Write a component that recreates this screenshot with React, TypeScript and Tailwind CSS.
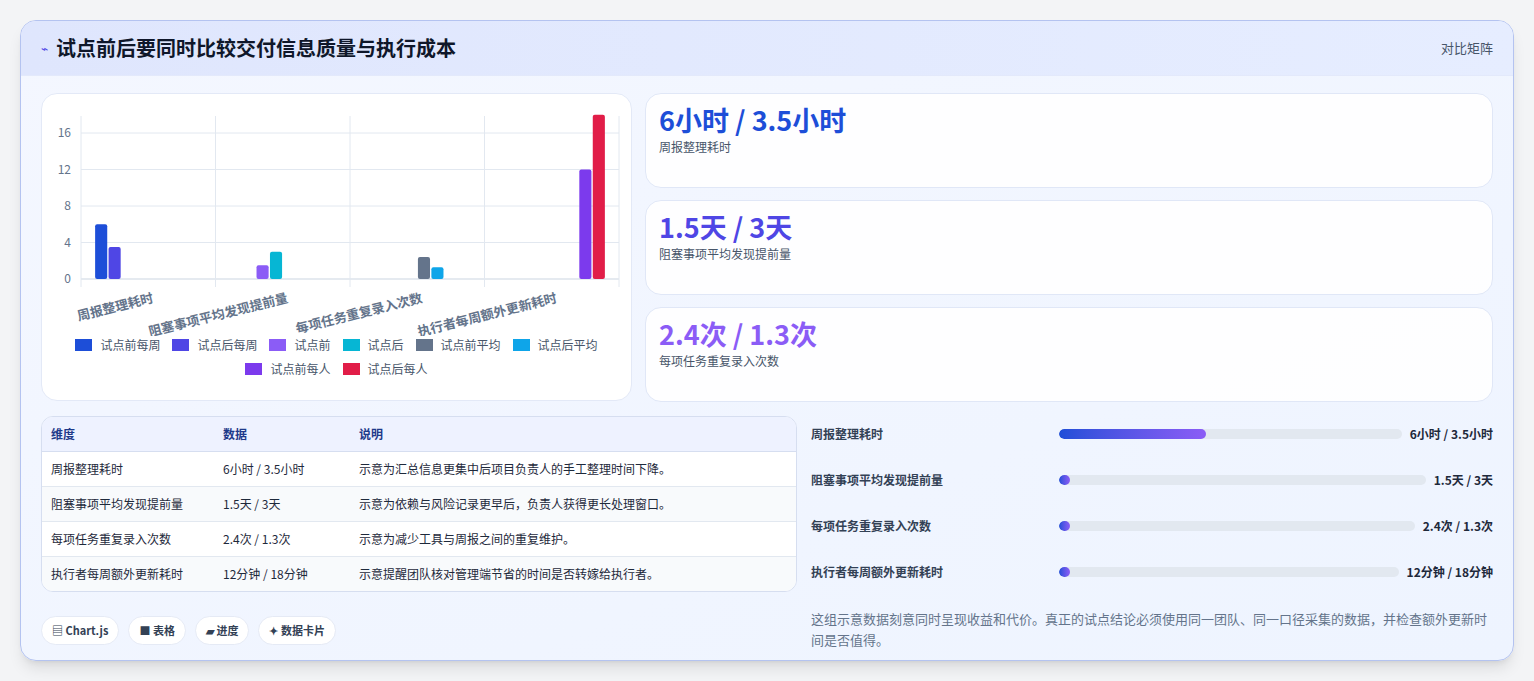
import React from "react";

const F = { fontFamily: '"Noto Sans CJK SC", "Noto Sans", sans-serif' };

const colors = ["#1d4ed8", "#4f46e5", "#8b5cf6", "#06b6d4", "#64748b", "#0ea5e9", "#7c3aed", "#e11d48"];
const legend = ["试点前每周", "试点后每周", "试点前", "试点后", "试点前平均", "试点后平均", "试点前每人", "试点后每人"];
const values = [6, 3.5, 1.5, 3, 2.4, 1.3, 12, 18];
const cats = ["周报整理耗时", "阻塞事项平均发现提前量", "每项任务重复录入次数", "执行者每周额外更新耗时"];

const rows = [
  ["周报整理耗时", "6小时 / 3.5小时", "示意为汇总信息更集中后项目负责人的手工整理时间下降。"],
  ["阻塞事项平均发现提前量", "1.5天 / 3天", "示意为依赖与风险记录更早后，负责人获得更长处理窗口。"],
  ["每项任务重复录入次数", "2.4次 / 1.3次", "示意为减少工具与周报之间的重复维护。"],
  ["执行者每周额外更新耗时", "12分钟 / 18分钟", "示意提醒团队核对管理端节省的时间是否转嫁给执行者。"],
];

const bars = [
  { label: "周报整理耗时", value: "6小时 / 3.5小时", pct: 43 },
  { label: "阻塞事项平均发现提前量", value: "1.5天 / 3天", pct: 3 },
  { label: "每项任务重复录入次数", value: "2.4次 / 1.3次", pct: 3 },
  { label: "执行者每周额外更新耗时", value: "12分钟 / 18分钟", pct: 3 },
];

const Chart = () => {
  const x0 = 80, x1 = 618, y0 = 279, k = 9.125;
  const cw = (x1 - x0) / 4;
  const slot = (cw * 0.8) / 8;
  return (
    <svg width="590" height="242" viewBox="41 94 590 242" style={F}>
      {[0, 4, 8, 12, 16].map((t) => (
        <g key={t}>
          <line x1={x0} x2={x1} y1={y0 - t * k} y2={y0 - t * k} stroke={t === 0 ? "#cbd5e1" : "#e2e8f0"} />
          <text x={70} y={y0 - t * k + 4} textAnchor="end" fontSize="12" fill="#64748b">{t}</text>
        </g>
      ))}
      <line x1={x0} x2={x0} y1={116} y2={287} stroke="#e2e8f0" />
      {[1, 2, 3, 4].map((i) => (
        <line key={i} x1={x0 + cw * i} x2={x0 + cw * i} y1={116} y2={287} stroke="#e2e8f0" />
      ))}
      {values.map((v, i) => {
        const c = Math.floor(i / 2);
        const x = x0 + cw * c + cw * 0.1 + slot * i + slot * 0.05;
        const h = v * k;
        return <rect key={i} x={x} y={y0 - h} width={slot * 0.9} height={h} rx="2" fill={colors[i]} />;
      })}
      {cats.map((c, i) => {
        const ax = x0 + cw * i + cw / 2 + 6;
        return (
          <text key={c} x={ax} y={302} textAnchor="end" fontSize="13" fontWeight="700" fill="#64748b" transform={`rotate(-14 ${ax} 302)`}>
            {c}
          </text>
        );
      })}
    </svg>
  );
};

export default function App() {
  return (
    <div className="min-h-screen bg-[#f3f4f6] p-5 pb-0" style={F}>
      <div className="rounded-2xl border border-[#b4c3f0] bg-gradient-to-br from-[#f4f7ff] to-[#eef4ff] overflow-hidden shadow-lg h-[641px]">
        <div className="h-[55px] bg-gradient-to-r from-[#dfe6fd] to-[#e6edff] flex items-center justify-between px-5 border-b border-[#e3e9fb]">
          <div className="flex items-center gap-2">
            <span className="text-[#4f46e5] text-xs">⌁</span>
            <h1 className="text-[20px] font-bold text-[#0f172a]">试点前后要同时比较交付信息质量与执行成本</h1>
          </div>
          <span className="text-[13px] text-[#475569]">对比矩阵</span>
        </div>
        <div className="px-5 pt-[17px]">
          <div className="flex gap-[13px]">
            <div className="w-[591px] h-[308px] rounded-2xl bg-white border border-[#e3e9f7] flex flex-col">
              <Chart />
              <div className="flex flex-wrap justify-center gap-x-[12px] gap-y-[6px] px-8 text-[12px] text-[#475569]">
                {legend.map((l, i) => (
                  <div key={l} className="flex items-center gap-[8px]">
                    <span className="w-[17px] h-[12px]" style={{ background: colors[i] }} />
                    <span>{l}</span>
                  </div>
                ))}
              </div>
            </div>
            <div className="flex-1 flex flex-col gap-3">
              {[
                ["6小时 / 3.5小时", "周报整理耗时", "text-[#1d4ed8]"],
                ["1.5天 / 3天", "阻塞事项平均发现提前量", "text-[#4f46e5]"],
                ["2.4次 / 1.3次", "每项任务重复录入次数", "text-[#8b5cf6]"],
              ].map(([v, l, c]) => (
                <div key={l} className="h-[95px] rounded-2xl bg-white/90 border border-[#e0e7f7] px-[13px] pt-[8px]">
                  <div className={`text-[27px] font-bold leading-[36px] ${c}`}>{v}</div>
                  <div className="text-[12px] text-[#475569]">{l}</div>
                </div>
              ))}
            </div>
          </div>
          <div className="flex gap-[14px] mt-[14px]">
            <div className="w-[756px]">
              <div className="rounded-xl border border-[#d6def0] overflow-hidden bg-white">
                <table className="w-full text-[12px] text-[#1e293b]">
                  <thead>
                    <tr className="bg-[#eef2ff] text-[#1e3a8a] font-bold text-left h-[34px] border-b border-[#d6def0]">
                      <th className="pl-[9px] w-[181px] font-bold">维度</th>
                      <th className="w-[136px] font-bold">数据</th>
                      <th className="font-bold">说明</th>
                    </tr>
                  </thead>
                  <tbody>
                    {rows.map((r, i) => (
                      <tr key={r[0]} className={`h-[35px] ${i < 3 ? "border-b border-[#e2e8f0]" : ""} ${i % 2 === 1 ? "bg-[#f8fafc]" : "bg-white"}`}>
                        <td className="pl-[9px]">{r[0]}</td>
                        <td>{r[1]}</td>
                        <td>{r[2]}</td>
                      </tr>
                    ))}
                  </tbody>
                </table>
              </div>
              <div className="flex gap-[9px] mt-[24px]">
                {["▤ Chart.js", "■ 表格", "▰ 进度", "✦ 数据卡片"].map((b) => (
                  <span key={b} className="h-[29px] px-[10px] rounded-full bg-white border border-[#e5eaf5] text-[11px] font-semibold text-[#334155] flex items-center">{b}</span>
                ))}
              </div>
            </div>
            <div className="flex-1 pt-[8px]">
              {bars.map((b) => (
                <div key={b.label} className="flex items-center h-[20px] mb-[26px] text-[12px]">
                  <span className="w-[240px] font-semibold text-[#334155]">{b.label}</span>
                  <div className="flex-1 h-[10px] rounded-full bg-[#e2e8f0] mx-[8px] overflow-hidden">
                    <div className="h-full rounded-full bg-gradient-to-r from-[#1d4ed8] to-[#8b5cf6] min-w-[11px]" style={{ width: `${b.pct}%` }} />
                  </div>
                  <span className="font-bold text-[#1e293b]">{b.value}</span>
                </div>
              ))}
              <p className="text-[13px] leading-[21px] text-[#64748b] mt-[2px]">
                这组示意数据刻意同时呈现收益和代价。真正的试点结论必须使用同一团队、同一口径采集的数据，并检查额外更新时间是否值得。
              </p>
            </div>
          </div>
        </div>
      </div>
    </div>
  );
}
